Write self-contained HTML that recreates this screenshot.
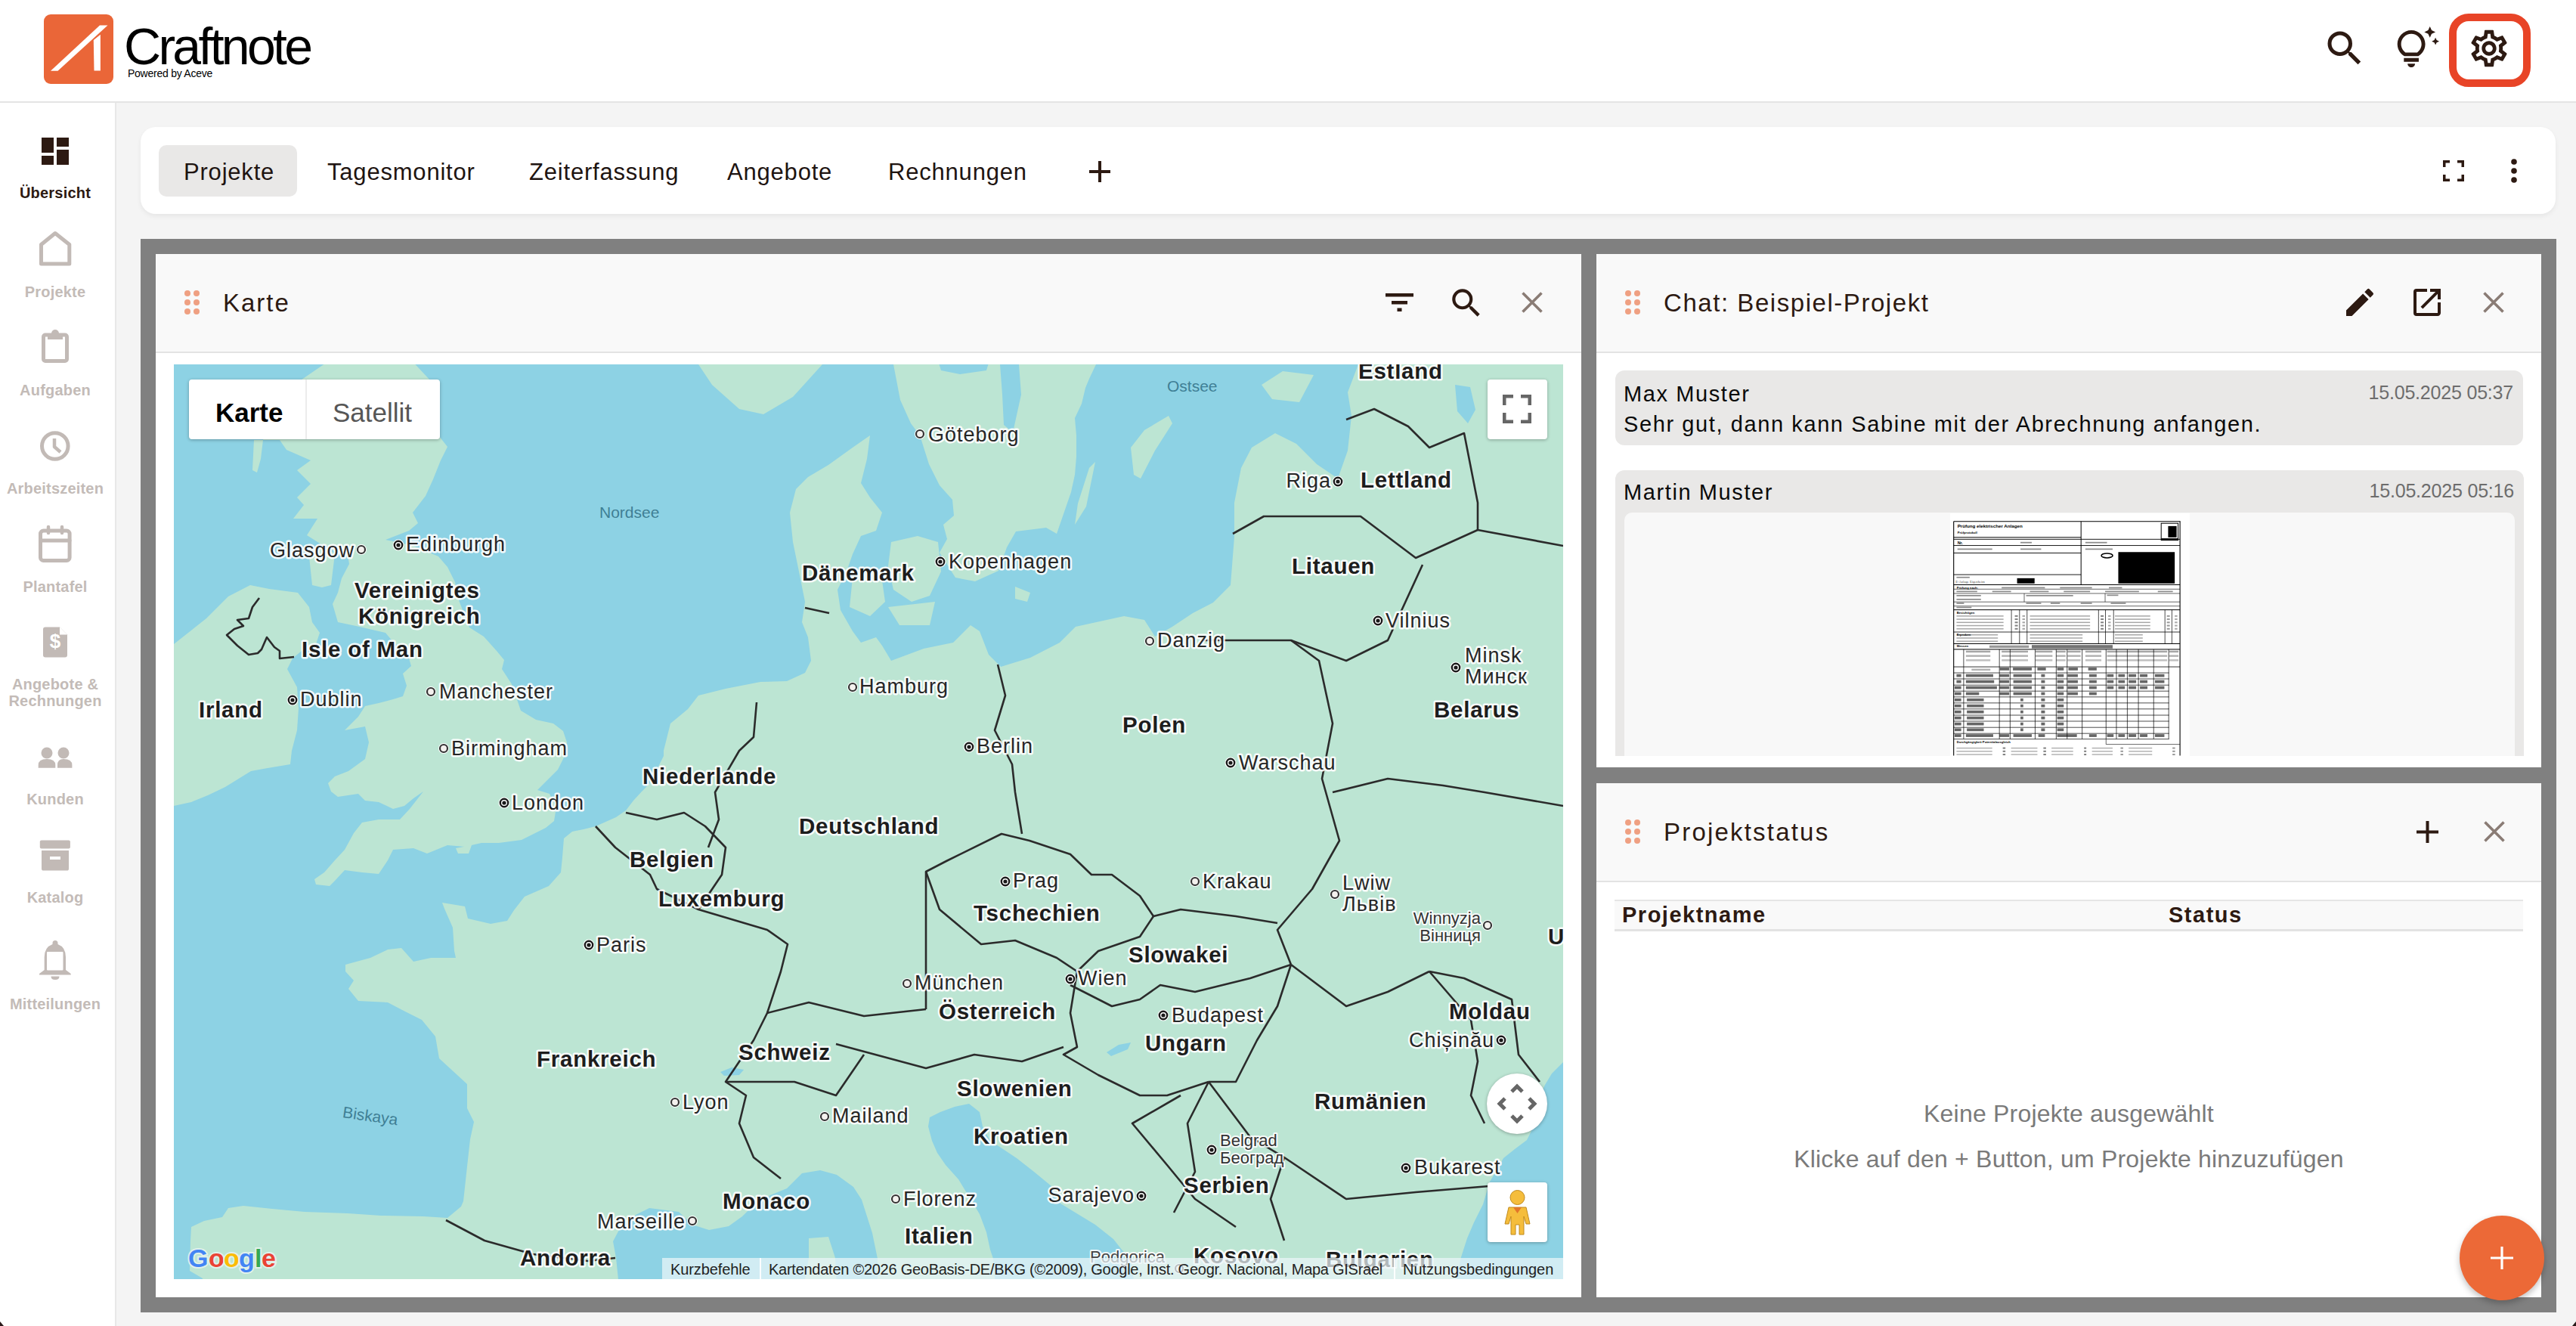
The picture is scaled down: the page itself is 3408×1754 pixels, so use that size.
<!DOCTYPE html>
<html><head><meta charset="utf-8">
<style>
*{margin:0;padding:0;box-sizing:border-box}
html,body{width:3408px;height:1754px;overflow:hidden;background:#f4f4f4;font-family:"Liberation Sans",sans-serif;color:#2d1a12}
.a{position:absolute}
.t{position:absolute;white-space:nowrap;line-height:1}
#hdr{left:0;top:0;width:3408px;height:136px;background:#fff;border-bottom:2px solid #e4e4e4}
#side{left:0;top:136px;width:154px;height:1618px;background:#fff;border-right:2px solid #e8e8e8}
.navl{position:absolute;left:0;width:146px;letter-spacing:0.2px;text-align:center;font-weight:bold;font-size:20px;color:#c3bbb7;line-height:22px;white-space:nowrap}
.navi{position:absolute;left:48px;width:56px;height:56px}
#tabs{left:186px;top:168px;width:3195px;height:115px;background:#fff;border-radius:20px;box-shadow:0 3px 6px rgba(0,0,0,.06)}
#frame{left:186px;top:316px;width:3196px;height:1420px;background:#808080}
.w{position:absolute;background:#fff;overflow:hidden}
.wh{position:absolute;left:0;top:0;right:0;height:131px;background:#f9f9f9;border-bottom:2px solid #e3e3e3}
.dots{position:absolute;width:21px;height:32px}
.wt{position:absolute;font-size:33px;color:#2d1a12;white-space:nowrap;line-height:1}
.tab{font-size:31px;color:#1e1411;letter-spacing:0.8px}
.msg{font-size:29px;color:#0a0a0a;letter-spacing:1.6px}
.ts{font-size:25px;color:#6d6d6d;letter-spacing:-0.2px}
.thd{font-size:29px;font-weight:bold;color:#2d1a12;letter-spacing:1.5px}
.empty{font-size:32px;color:#7a7a7a;letter-spacing:0.2px}
</style></head><body>

<!-- HEADER -->
<div id="hdr" class="a">
  <svg class="a" style="left:58px;top:19px" width="92" height="92" viewBox="0 0 92 92">
    <rect x="0" y="0" width="92" height="92" rx="9" fill="#ea6638"/>
    <path d="M9 74.8 L18.5 74.8 L84.5 14.5 L74 14.5 Z" fill="#fff"/>
    <path d="M65.8 34 L74.9 26.7 L74.9 74.4 L66.5 74.4 Z" fill="#fff"/>
  </svg>
  <div class="t" id="brand" style="left:164px;top:27px;font-size:68px;color:#000;letter-spacing:-3.7px">Craftnote</div>
  <div class="t" id="powered" style="left:169px;top:90px;font-size:14px;color:#000;letter-spacing:-0.25px">Powered by Aceve</div>
  <!-- search -->
  <svg class="a" style="left:3072px;top:34px" width="60" height="60" viewBox="0 0 24 24"><path fill="#2d1a12" d="M15.5 14h-.79l-.28-.27A6.47 6.47 0 0 0 16 9.5 6.5 6.5 0 1 0 9.5 16c1.61 0 3.09-.59 4.23-1.57l.27.28v.79l5 4.99L20.49 19l-4.99-5zm-6 0C7.01 14 5 11.99 5 9.5S7.01 5 9.5 5 14 7.01 14 9.5 11.99 14 9.5 14z"/></svg>
  <!-- bulb -->
  <svg class="a" style="left:3168px;top:35px" width="59" height="59" viewBox="0 0 24 24"><path fill="#2d1a12" d="M7 20h4c0 1.1-.9 2-2 2s-2-.9-2-2zm-2-1h8v-2H5v2zm11.5-9.5c0 3.82-2.66 5.86-3.77 6.5H5.27c-1.11-.64-3.77-2.68-3.77-6.5C1.5 5.36 4.86 2 9 2s7.5 3.36 7.5 7.5zm-2 0C14.5 6.47 12.030 4 9 4S3.5 6.47 3.5 9.5c0 2.47 1.49 3.89 2.35 4.5h6.3c.86-.61 2.35-2.03 2.35-4.5zm6.87-2.13L20 8l1.37.63L22 10l.63-1.37L24 8l-1.37-.63L22 6l-.63 1.37zM19 6l.94-2.06L22 3l-2.06-.94L19 0l-.94 2.06L16 3l2.06.94L19 6z"/></svg>
  <!-- settings highlighted -->
  <div class="a" style="left:3240px;top:18px;width:108px;height:97px;border:10px solid #e84427;border-radius:26px"></div>
  <svg class="a" style="left:3264px;top:35px" width="58" height="58" viewBox="0 0 24 24"><path fill="#2d1a12" d="M19.43 12.98c.04-.32.07-.64.07-.98 0-.34-.03-.66-.07-.98l2.11-1.65c.19-.15.24-.42.12-.64l-2-3.46a.5.5 0 0 0-.61-.22l-2.49 1c-.52-.4-1.08-.73-1.69-.98l-.38-2.65A.49.49 0 0 0 14 2h-4c-.25 0-.46.18-.49.42l-.38 2.65c-.61.25-1.17.59-1.69.98l-2.49-1a.57.57 0 0 0-.18-.03c-.17 0-.34.09-.43.25l-2 3.46c-.13.22-.07.49.12.64l2.11 1.65c-.04.32-.07.65-.07.98 0 .33.03.66.07.98l-2.11 1.65c-.19.15-.24.42-.12.64l2 3.46a.5.5 0 0 0 .61.22l2.49-1c.52.4 1.08.73 1.69.98l.38 2.65c.03.24.24.42.49.42h4c.25 0 .46-.18.49-.42l.38-2.65c.61-.25 1.17-.59 1.69-.98l2.49 1c.06.02.12.03.18.03.17 0 .34-.09.43-.25l2-3.46c.12-.22.07-.49-.12-.64l-2.11-1.65zm-1.98-1.71c.04.31.05.52.05.73 0 .21-.02.43-.05.73l-.14 1.13.89.7 1.08.84-.7 1.21-1.27-.51-1.04-.42-.9.68c-.43.32-.84.56-1.25.73l-1.06.43-.16 1.13-.2 1.35h-1.4l-.19-1.35-.16-1.13-1.06-.43c-.43-.18-.83-.41-1.23-.71l-.91-.7-1.06.43-1.27.51-.7-1.21 1.08-.84.89-.7-.14-1.13c-.03-.31-.05-.54-.05-.74s.02-.43.05-.73l.14-1.13-.89-.7-1.08-.84.7-1.21 1.27.51 1.04.42.9-.68c.43-.32.84-.56 1.25-.73l1.06-.43.16-1.13.2-1.35h1.39l.19 1.35.16 1.13 1.06.43c.43.18.83.41 1.23.71l.91.7 1.06-.43 1.27-.51.7 1.21-1.07.85-.89.7.14 1.13zM12 8c-2.21 0-4 1.79-4 4s1.79 4 4 4 4-1.79 4-4-1.79-4-4-4zm0 6c-1.1 0-2-.9-2-2s.9-2 2-2 2 .9 2 2-.9 2-2 2z"/></svg>
</div>

<!-- SIDEBAR -->
<div id="side" class="a">
</div>
<svg class="a" style="left:0;top:0" width="153" height="1754" viewBox="0 0 153 1754">
  <g fill="#2d1a12">
    <rect x="55" y="182" width="16" height="20"/><rect x="55" y="206" width="16" height="12"/>
    <rect x="75" y="182" width="16" height="12"/><rect x="75" y="198" width="16" height="20"/>
  </g>
  <g fill="none" stroke="#c2bab6" stroke-width="5" stroke-linejoin="round" stroke-linecap="round">
    <path d="M54.5 323.5 L73 308.5 L91.8 323.5 V349 H54.5 Z"/>
    <rect x="57.5" y="443" width="31" height="34.5" rx="2.5"/>
    <circle cx="72.8" cy="590" r="17.3"/>
    <path d="M72 580 V591 L80 598" stroke-width="4.5" stroke-linecap="butt"/>
    <rect x="53.5" y="702" width="38.6" height="39.5" rx="4"/>
    <path d="M53.5 715 H92" />
    <path d="M64 697 V705 M82 697 V705" stroke-width="4.5"/>
  </g>
  <g fill="#c2bab6">
    <rect x="63" y="441" width="20" height="8"/>
    <circle cx="73" cy="441" r="5"/>
    <path d="M60 829.5 H79 L89 839.5 V866.6 Q89 869.6 86 869.6 H60 Q57 869.6 57 866.6 V832.5 Q57 829.5 60 829.5Z"/>
    <circle cx="62" cy="996" r="7.5"/><circle cx="84" cy="996" r="7.5"/>
    <path d="M50.7 1015.7 V1012 Q50.7 1004 62 1004 Q73.3 1004 73.3 1012 V1015.7Z"/>
    <path d="M76 1015.7 V1012 Q76 1004 84 1004 Q95.4 1004 95.4 1012 V1015.7Z"/>
    <rect x="52.8" y="1111.5" width="40.1" height="11" rx="2"/>
    <path d="M55 1125 H91 V1149 Q91 1151.6 88.5 1151.6 H57.5 Q55 1151.6 55 1149Z"/>
    <path d="M73 1244 a3.5 3.5 0 0 1 3.5 3.5 V1249 Q87 1253 87 1266 V1283 L93.7 1288 V1289.5 H52 V1288 L58.7 1283 V1266 Q58.7 1253 69.5 1249 V1247.5 A3.5 3.5 0 0 1 73 1244Z"/>
    <path d="M67.5 1291.5 H78.5 Q78.5 1296 73 1296 Q67.5 1296 67.5 1291.5Z"/>
  </g>
  <g fill="#fff">
    <rect x="66" y="1133" width="14" height="4"/>
    <path d="M79 829.5 V839.5 H89Z"/>
    <rect x="62" y="1259" width="21.5" height="24.5" rx="1"/>
  </g>
  <text x="73" y="850" font-family="Liberation Sans" font-weight="bold" font-size="26" fill="#fff" text-anchor="middle" dominant-baseline="middle">$</text>
</svg>
<div class="navl" style="top:244px;color:#2d1a12">Übersicht</div>
<div class="navl" style="top:375px">Projekte</div>
<div class="navl" style="top:505px">Aufgaben</div>
<div class="navl" style="top:635px">Arbeitszeiten</div>
<div class="navl" style="top:765px">Plantafel</div>
<div class="navl" style="top:894px">Angebote &amp;<br>Rechnungen</div>
<div class="navl" style="top:1046px">Kunden</div>
<div class="navl" style="top:1176px">Katalog</div>
<div class="navl" style="top:1317px">Mitteilungen</div>

<!-- TABS -->
<div id="tabs" class="a">
  <div class="a" style="left:24px;top:24px;width:183px;height:68px;background:#e9e8e7;border-radius:10px"></div>
  <div class="t tab" style="left:57px;top:44px">Projekte</div>
  <div class="t tab" style="left:247px;top:44px">Tagesmonitor</div>
  <div class="t tab" style="left:514px;top:44px">Zeiterfassung</div>
  <div class="t tab" style="left:776px;top:44px">Angebote</div>
  <div class="t tab" style="left:989px;top:44px">Rechnungen</div>
  <svg class="a" style="left:1253px;top:43px" width="32" height="32" viewBox="0 0 32 32"><path d="M14 2h4v12h12v4H18v12h-4V18H2v-4h12z" fill="#2d1a12"/></svg>
  <svg class="a" style="left:3046px;top:44px" width="28" height="28" viewBox="0 0 28 28"><path d="M0 0h9v3.5H3.5V9H0zM19 0h9v9h-3.5V3.5H19zM0 19h3.5v5.5H9V28H0zM24.5 19H28v9h-9v-3.5h5.5z" fill="#2d1a12"/></svg>
  <svg class="a" style="left:3136px;top:42px" width="8" height="32" viewBox="0 0 8 32"><circle cx="4" cy="4" r="3.8" fill="#2d1a12"/><circle cx="4" cy="16" r="3.8" fill="#2d1a12"/><circle cx="4" cy="28" r="3.8" fill="#2d1a12"/></svg>
</div>

<!-- FRAME -->
<div id="frame" class="a"></div>
<!-- KARTE -->
<div class="w" id="wk" style="left:206px;top:336px;width:1886px;height:1380px">
  <div class="wh"></div>
  <svg class="a" style="left:38px;top:48px" width="21" height="33" viewBox="0 0 21 33"><g fill="#efa082"><circle cx="4" cy="4" r="4"/><circle cx="16" cy="4" r="4"/><circle cx="4" cy="16" r="4"/><circle cx="16" cy="16" r="4"/><circle cx="4" cy="28" r="4"/><circle cx="16" cy="28" r="4"/></g></svg>
  <div class="wt" style="left:89px;top:48px;letter-spacing:2px">Karte</div>
  <svg class="a" style="left:1627px;top:52px" width="37" height="24" viewBox="0 0 37 24"><path d="M0 0h37v4.5H0zM8 10h21v4.5H8zM15.5 19.5h6v4.5h-6z" fill="#2d1a12"/></svg>
  <svg class="a" style="left:1709px;top:40px" width="50" height="50" viewBox="0 0 24 24"><path fill="#2d1a12" d="M15.5 14h-.79l-.28-.27A6.47 6.47 0 0 0 16 9.5 6.5 6.5 0 1 0 9.5 16c1.61 0 3.09-.59 4.23-1.57l.27.28v.79l5 4.99L20.49 19l-4.99-5zm-6 0C7.01 14 5 11.99 5 9.5S7.01 5 9.5 5 14 7.01 14 9.5 11.99 14 9.5 14z"/></svg>
  <svg class="a" style="left:1807px;top:50px" width="28" height="28" viewBox="0 0 28 28"><path d="M1.5 1.5L26.5 26.5M26.5 1.5L1.5 26.5" stroke="#8a7c75" stroke-width="3.6"/></svg>
  <div class="a" id="map" style="left:24px;top:146px;width:1838px;height:1210px;background:#8dd2e4;overflow:hidden">
<!--MAPSVG-->
<svg class="a" style="left:0;top:0" width="1838" height="1210" viewBox="0 0 1838 1210">
<rect width="1838" height="1210" fill="#8dd2e4"/>
<path fill="#bce5d3" d="M39 1220 L38 1209 L21 1199 L22 1160 L23 1141 L40 1133 L64 1128 L72 1116 L92 1113 L130 1117 L173 1121 L230 1123 L274 1126 L330 1127 L362 1129 L380 1114 L383 1107 L388 1061 L392 1025 L397 1002 L388 984 L388 952 L351 918 L346 889 L328 867 L306 856 L283 844 L244 842 L231 826 L238 815 L227 803 L227 794 L260 785 L283 774 L301 772 L317 790 L340 785 L373 785 L371 776 L369 745 L358 720 L355 712 L385 717 L389 733 L419 740 L441 736 L450 722 L464 704 L496 690 L512 672 L514 652 L516 627 L527 618 L542 615 L558 611 L585 599 L598 590 L608 577 L619 565 L630 554 L641 532 L648 518 L648 511 L657 475 L680 456 L694 438 L730 429 L776 420 L811 419 L835 408 L843 392 L839 361 L831 341 L835 314 L827 274 L819 235 L815 196 L823 165 L839 149 L866 133 L898 110 L921 94 L917 125 L909 157 L921 176 L937 196 L929 220 L909 227 L898 251 L890 274 L878 298 L882 325 L898 353 L909 368 L929 361 L937 372 L949 392 L992 376 L1031 368 L1054 345 L1066 353 L1078 384 L1094 400 L1133 388 L1172 368 L1193 347 L1257 333 L1284 338 L1298 360 L1321 347 L1348 329 L1375 315 L1398 292 L1403 228 L1403 183 L1412 137 L1426 110 L1457 91 L1485 105 L1512 132 L1540 151 L1553 114 L1558 68 L1553 37 L1567 0 L1567 -10 L1850 -10 L1850 923 L1838 923 L1823 938 L1814 953 L1802 978 L1796 1014 L1790 1026 L1774 1038 L1759 1050 L1750 1066 L1741 1081 L1732 1111 L1720 1135 L1711 1156 L1702 1184 L1696 1220 L1271 1220 L1266 1183 L1254 1171 L1243 1157 L1219 1138 L1196 1124 L1173 1110 L1161 1087 L1138 1068 L1115 1050 L1091 1034 L1080 1027 L1070 1008 L1066 989 L1052 978 L1033 982 L1014 989 L1000 996 L998 1008 L1003 1027 L1010 1043 L1021 1059 L1038 1078 L1052 1101 L1066 1124 L1075 1148 L1080 1171 L1084 1183 L1087 1220 L931 1220 L931 1183 L924 1149 L917 1127 L910 1105 L899 1088 L877 1072 L855 1066 L831 1070 L811 1090 L789 1099 L767 1112 L752 1127 L734 1140 L708 1145 L686 1138 L668 1121 L629 1116 L611 1125 L589 1145 L581 1160 L585 1182 L589 1220Z M213 -10 L310 -10 L340 22 L348 60 L351 95 L362 109 L353 127 L343 152 L333 174 L316 196 L323 210 L311 220 L280 232 L314 239 L350 254 L362 268 L372 288 L377 312 L391 348 L410 360 L427 379 L437 391 L434 403 L447 423 L459 458 L479 470 L502 475 L515 485 L520 500 L517 518 L508 536 L497 547 L481 563 L497 568 L506 586 L503 604 L492 613 L470 624 L460 629 L430 633 L407 633 L385 638 L362 636 L335 647 L317 640 L290 642 L283 656 L271 674 L249 672 L226 669 L213 683 L206 690 L188 688 L186 681 L199 672 L213 656 L226 642 L238 620 L249 606 L271 602 L299 602 L312 588 L330 565 L317 574 L305 584 L290 588 L271 579 L253 577 L244 568 L217 572 L208 565 L204 554 L213 545 L231 538 L253 522 L258 500 L253 479 L226 484 L244 466 L253 452 L271 448 L290 443 L303 439 L308 425 L303 409 L314 399 L309 382 L290 367 L280 355 L241 346 L217 341 L210 317 L217 302 L222 283 L232 264 L230 252 L215 250 L204 240 L195 238 L176 226 L190 204 L158 204 L172 186 L163 176 L181 158 L163 140 L181 127 L149 113 L140 100 L118 100 L140 40 L213 -10Z M195 238 L212 250 L212 259 L208 292 L196 295 L183 292 L179 254Z M-10 370 L0 370 L43 336 L72 307 L101 292 L126 297 L164 302 L179 321 L183 341 L193 355 L188 370 L169 379 L157 389 L150 403 L163 427 L165 455 L163 484 L156 511 L154 529 L124 534 L102 538 L68 559 L45 570 L23 579 L0 584 L-10 584Z M694 -10 L694 0 L712 27 L748 59 L780 66 L819 43 L858 0 L858 -10Z M952 -10 L952 0 L961 47 L975 78 L987 94 L999 132 L1013 160 L1030 179 L1032 200 L1018 212 L1023 231 L1013 249 L1034 282 L1060 287 L1091 273 L1102 242 L1114 221 L1154 216 L1168 224 L1178 195 L1187 169 L1192 146 L1194 122 L1194 94 L1192 71 L1201 52 L1206 31 L1211 19 L1220 0 L1220 -10Z M949 235 L984 227 L1011 235 L1015 274 L1000 306 L976 314 L952 298 L945 267Z M898 282 L937 286 L941 314 L921 333 L894 321Z M945 321 L1007 314 L1000 345 L960 345Z M1113 294 L1133 302 L1129 314 L1113 310Z M1219 129 L1211 137 L1196 184 L1192 212 L1207 188Z M1316 68 L1321 78 L1298 114 L1279 151 L1270 146 L1266 110 L1284 87Z M1439 27 L1467 9 L1508 14 L1489 50 L1453 46Z M840 1156 L866 1154 L875 1182 L877 1220 L833 1220 L840 1182Z M373 640 L394 636 L390 647 L376 647Z M106 100 L118 100 L115 125 L110 143 L104 140Z"/>
<path fill="#8dd2e4" d="M1011 -5 L1079 -5 L1075 8 L1040 13 L1015 8Z M1093 0 L1118 0 L1121 40 L1110 90 L1098 80 L1096 40Z M1695 27 L1715 30 L1722 60 L1712 78 L1698 62Z M1234 910 L1250 900 L1266 897 L1262 906 L1240 915Z M723 936 L738 930 L754 933 L748 940 L728 941Z"/>
<g fill="none" stroke="#2b2b2b" stroke-width="2.6" stroke-linejoin="round">
<path d="M113 309 L104 321 L99 336 L84 338 L92 346 L80 350 L70 358 L84 372 L99 384 L111 382 L116 377 L123 361 L133 374 L140 379 L140 389 L159 387"/>
<path d="M558 611 L584 639 L630 675 L639 694 L694 721 L785 748 L812 767 L803 803 L785 858 L767 894 L730 949 L757 967 L748 1004 L767 1049 L803 1077"/>
<path d="M598 593 L639 602 L675 593 L703 611 L730 639 L725 675 L694 721"/>
<path d="M771 447 L767 493 L748 511 L716 566 L721 602 L707 639"/>
<path d="M785 858 L840 844 L913 862 L995 853"/>
<path d="M730 949 L821 949 L876 967 L913 913"/>
<path d="M876 899 L995 931 L1059 913 L1122 922 L1177 903"/>
<path d="M995 853 L995 671 L1022 657 L1095 621 L1132 630 L1186 648 L1214 675 L1241 675 L1278 703 L1296 730 L1332 721 L1405 730 L1460 739"/>
<path d="M995 671 L1013 721 L1068 767 L1113 762 L1168 785 L1195 803 L1223 776 L1278 757 L1296 730"/>
<path d="M1186 821 L1241 849 L1278 840 L1305 821 L1351 830 L1424 812 L1478 794"/>
<path d="M1195 803 L1186 858 L1195 903 L1177 913 L1223 940 L1278 967 L1314 967 L1369 949"/>
<path d="M1478 794 L1460 849 L1433 894 L1405 949 L1369 949"/>
<path d="M1090 397 L1100 438 L1086 484 L1109 529 L1113 566 L1122 621"/>
<path d="M1360 365 L1396 365 L1478 365 L1515 392 L1533 475 L1519 548 L1542 630 L1506 694 L1460 748 L1478 794"/>
<path d="M1401 224 L1442 201 L1570 201 L1643 256 L1725 219"/>
<path d="M1478 365 L1551 392 L1606 365 L1652 265"/>
<path d="M1551 73 L1588 59 L1633 82 L1661 110 L1707 91 L1725 183 L1725 219 L1838 240"/>
<path d="M1533 566 L1606 548 L1679 557 L1734 566 L1838 584"/>
<path d="M1661 803 L1707 812 L1770 840 L1779 913 L1807 949"/>
<path d="M1661 803 L1716 867 L1725 922 L1716 967 L1734 1004"/>
<path d="M1478 794 L1551 849 L1606 830 L1661 803"/>
<path d="M1369 949 L1424 1022 L1469 1049 L1551 1104 L1643 1095 L1752 1086"/>
<path d="M1332 967 L1268 1004 L1314 1059 L1351 1104 L1405 1141"/>
<path d="M1369 949 L1341 1004 L1351 1068 L1323 1122"/>
<path d="M1469 1049 L1451 1104 L1469 1159"/>
<path d="M360 1132 L411 1159 L475 1177 L548 1186 L584 1182"/>
<path d="M835 322 L867 329"/>
</g>
<g font-family="Liberation Sans" font-weight="bold" font-size="29.5" letter-spacing="0.75" fill="#1d1d1d" stroke="#fff" stroke-opacity=".9" stroke-width="5" paint-order="stroke" stroke-linejoin="round">
<text x="1567" y="19">Estland</text>
<text x="1570" y="163">Lettland</text>
<text x="1479" y="277">Litauen</text>
<text x="1667" y="467">Belarus</text>
<text x="1255" y="487">Polen</text>
<text x="831" y="286">Dänemark</text>
<text x="239" y="309">Vereinigtes</text>
<text x="244" y="343">Königreich</text>
<text x="169" y="387">Isle of Man</text>
<text x="33" y="467">Irland</text>
<text x="620" y="555">Niederlande</text>
<text x="827" y="621">Deutschland</text>
<text x="603" y="665">Belgien</text>
<text x="641" y="717">Luxemburg</text>
<text x="1058" y="736">Tschechien</text>
<text x="1263" y="791">Slowakei</text>
<text x="1012" y="866">Österreich</text>
<text x="747" y="920">Schweiz</text>
<text x="480" y="929">Frankreich</text>
<text x="1285" y="908">Ungarn</text>
<text x="1036" y="968">Slowenien</text>
<text x="1058" y="1031">Kroatien</text>
<text x="1509" y="985">Rumänien</text>
<text x="1687" y="866">Moldau</text>
<text x="726" y="1117">Monaco</text>
<text x="1336" y="1096">Serbien</text>
<text x="967" y="1163">Italien</text>
<text x="458" y="1192">Andorra</text>
<text x="1349" y="1189">Kosovo</text>
<text x="1524" y="1194">Bulgarien</text>
<text x="1818" y="767">U</text>
</g>
<g font-family="Liberation Sans" font-size="27" letter-spacing="1" fill="#262626" stroke="#fff" stroke-opacity=".9" stroke-width="5" paint-order="stroke" stroke-linejoin="round">
<text x="998" y="102">Göteborg</text>
<text x="1531" y="163" text-anchor="end">Riga</text>
<text x="1025" y="270">Kopenhagen</text>
<text x="239" y="255" text-anchor="end">Glasgow</text>
<text x="307" y="247">Edinburgh</text>
<text x="1301" y="374">Danzig</text>
<text x="1603" y="348">Vilnius</text>
<text x="907" y="435">Hamburg</text>
<text x="351" y="442">Manchester</text>
<text x="167" y="452">Dublin</text>
<text x="367" y="517">Birmingham</text>
<text x="1062" y="514">Berlin</text>
<text x="1409" y="536">Warschau</text>
<text x="447" y="589">London</text>
<text x="559" y="777">Paris</text>
<text x="1110" y="692">Prag</text>
<text x="1361" y="693">Krakau</text>
<text x="980" y="827">München</text>
<text x="1196" y="821">Wien</text>
<text x="1320" y="870">Budapest</text>
<text x="1747" y="903" text-anchor="end">Chișinău</text>
<text x="673" y="985">Lyon</text>
<text x="871" y="1003">Mailand</text>
<text x="1641" y="1071">Bukarest</text>
<text x="677" y="1143" text-anchor="end">Marseille</text>
<text x="965" y="1113">Florenz</text>
<text x="1271" y="1108" text-anchor="end">Sarajevo</text>
<text x="1708" y="394">Minsk</text><text x="1708" y="422">Минск</text>
<text x="1546" y="695">Lwiw</text><text x="1546" y="723">Львів</text>
</g>
<g font-family="Liberation Sans" font-size="22" fill="#333" stroke="#fff" stroke-opacity=".9" stroke-width="4" paint-order="stroke" stroke-linejoin="round">
<text x="1729" y="740" text-anchor="end">Winnyzja</text><text x="1729" y="763" text-anchor="end">Вінниця</text>
<text x="1384" y="1034">Belgrad</text><text x="1384" y="1057">Београд</text>
<text x="1212" y="1188" fill="#444">Podgorica</text>
</g>
<g stroke="#fff" stroke-width="2">
<circle cx="987" cy="92" r="7" fill="#fff" stroke="none"/><circle cx="987" cy="92" r="5" fill="#f4f1ee" stroke="#333" stroke-width="2.2"/>
<circle cx="1540" cy="155" r="7.5" fill="#fff" stroke="none"/><circle cx="1540" cy="155" r="5.2" fill="#fff" stroke="#1a1a1a" stroke-width="2.4"/><circle cx="1540" cy="155" r="2.6" fill="#1a1a1a" stroke="none"/>
<circle cx="1014" cy="261" r="7.5" fill="#fff" stroke="none"/><circle cx="1014" cy="261" r="5.2" fill="#fff" stroke="#1a1a1a" stroke-width="2.4"/><circle cx="1014" cy="261" r="2.6" fill="#1a1a1a" stroke="none"/>
<circle cx="248" cy="245" r="7" fill="#fff" stroke="none"/><circle cx="248" cy="245" r="5" fill="#f4f1ee" stroke="#333" stroke-width="2.2"/>
<circle cx="297" cy="239" r="7.5" fill="#fff" stroke="none"/><circle cx="297" cy="239" r="5.2" fill="#fff" stroke="#1a1a1a" stroke-width="2.4"/><circle cx="297" cy="239" r="2.6" fill="#1a1a1a" stroke="none"/>
<circle cx="1291" cy="366" r="7" fill="#fff" stroke="none"/><circle cx="1291" cy="366" r="5" fill="#f4f1ee" stroke="#333" stroke-width="2.2"/>
<circle cx="1593" cy="339" r="7.5" fill="#fff" stroke="none"/><circle cx="1593" cy="339" r="5.2" fill="#fff" stroke="#1a1a1a" stroke-width="2.4"/><circle cx="1593" cy="339" r="2.6" fill="#1a1a1a" stroke="none"/>
<circle cx="898" cy="427" r="7" fill="#fff" stroke="none"/><circle cx="898" cy="427" r="5" fill="#f4f1ee" stroke="#333" stroke-width="2.2"/>
<circle cx="340" cy="433" r="7" fill="#fff" stroke="none"/><circle cx="340" cy="433" r="5" fill="#f4f1ee" stroke="#333" stroke-width="2.2"/>
<circle cx="157" cy="444" r="7.5" fill="#fff" stroke="none"/><circle cx="157" cy="444" r="5.2" fill="#fff" stroke="#1a1a1a" stroke-width="2.4"/><circle cx="157" cy="444" r="2.6" fill="#1a1a1a" stroke="none"/>
<circle cx="357" cy="508" r="7" fill="#fff" stroke="none"/><circle cx="357" cy="508" r="5" fill="#f4f1ee" stroke="#333" stroke-width="2.2"/>
<circle cx="1052" cy="506" r="7.5" fill="#fff" stroke="none"/><circle cx="1052" cy="506" r="5.2" fill="#fff" stroke="#1a1a1a" stroke-width="2.4"/><circle cx="1052" cy="506" r="2.6" fill="#1a1a1a" stroke="none"/>
<circle cx="1398" cy="527" r="7.5" fill="#fff" stroke="none"/><circle cx="1398" cy="527" r="5.2" fill="#fff" stroke="#1a1a1a" stroke-width="2.4"/><circle cx="1398" cy="527" r="2.6" fill="#1a1a1a" stroke="none"/>
<circle cx="437" cy="580" r="7.5" fill="#fff" stroke="none"/><circle cx="437" cy="580" r="5.2" fill="#fff" stroke="#1a1a1a" stroke-width="2.4"/><circle cx="437" cy="580" r="2.6" fill="#1a1a1a" stroke="none"/>
<circle cx="549" cy="768" r="7.5" fill="#fff" stroke="none"/><circle cx="549" cy="768" r="5.2" fill="#fff" stroke="#1a1a1a" stroke-width="2.4"/><circle cx="549" cy="768" r="2.6" fill="#1a1a1a" stroke="none"/>
<circle cx="1100" cy="684" r="7.5" fill="#fff" stroke="none"/><circle cx="1100" cy="684" r="5.2" fill="#fff" stroke="#1a1a1a" stroke-width="2.4"/><circle cx="1100" cy="684" r="2.6" fill="#1a1a1a" stroke="none"/>
<circle cx="1351" cy="684" r="7" fill="#fff" stroke="none"/><circle cx="1351" cy="684" r="5" fill="#f4f1ee" stroke="#333" stroke-width="2.2"/>
<circle cx="970" cy="819" r="7" fill="#fff" stroke="none"/><circle cx="970" cy="819" r="5" fill="#f4f1ee" stroke="#333" stroke-width="2.2"/>
<circle cx="1186" cy="813" r="7.5" fill="#fff" stroke="none"/><circle cx="1186" cy="813" r="5.2" fill="#fff" stroke="#1a1a1a" stroke-width="2.4"/><circle cx="1186" cy="813" r="2.6" fill="#1a1a1a" stroke="none"/>
<circle cx="1309" cy="861" r="7.5" fill="#fff" stroke="none"/><circle cx="1309" cy="861" r="5.2" fill="#fff" stroke="#1a1a1a" stroke-width="2.4"/><circle cx="1309" cy="861" r="2.6" fill="#1a1a1a" stroke="none"/>
<circle cx="1756" cy="894" r="7.5" fill="#fff" stroke="none"/><circle cx="1756" cy="894" r="5.2" fill="#fff" stroke="#1a1a1a" stroke-width="2.4"/><circle cx="1756" cy="894" r="2.6" fill="#1a1a1a" stroke="none"/>
<circle cx="663" cy="976" r="7" fill="#fff" stroke="none"/><circle cx="663" cy="976" r="5" fill="#f4f1ee" stroke="#333" stroke-width="2.2"/>
<circle cx="861" cy="995" r="7" fill="#fff" stroke="none"/><circle cx="861" cy="995" r="5" fill="#f4f1ee" stroke="#333" stroke-width="2.2"/>
<circle cx="1630" cy="1063" r="7.5" fill="#fff" stroke="none"/><circle cx="1630" cy="1063" r="5.2" fill="#fff" stroke="#1a1a1a" stroke-width="2.4"/><circle cx="1630" cy="1063" r="2.6" fill="#1a1a1a" stroke="none"/>
<circle cx="686" cy="1133" r="7" fill="#fff" stroke="none"/><circle cx="686" cy="1133" r="5" fill="#f4f1ee" stroke="#333" stroke-width="2.2"/>
<circle cx="955" cy="1104" r="7" fill="#fff" stroke="none"/><circle cx="955" cy="1104" r="5" fill="#f4f1ee" stroke="#333" stroke-width="2.2"/>
<circle cx="1280" cy="1100" r="7.5" fill="#fff" stroke="none"/><circle cx="1280" cy="1100" r="5.2" fill="#fff" stroke="#1a1a1a" stroke-width="2.4"/><circle cx="1280" cy="1100" r="2.6" fill="#1a1a1a" stroke="none"/>
<circle cx="1330" cy="1196" r="7" fill="#fff" stroke="none"/><circle cx="1330" cy="1196" r="5" fill="#f4f1ee" stroke="#333" stroke-width="2.2"/>
<circle cx="1696" cy="401" r="7.5" fill="#fff" stroke="none"/><circle cx="1696" cy="401" r="5.2" fill="#fff" stroke="#1a1a1a" stroke-width="2.4"/><circle cx="1696" cy="401" r="2.6" fill="#1a1a1a" stroke="none"/>
<circle cx="1536" cy="701" r="7" fill="#fff" stroke="none"/><circle cx="1536" cy="701" r="5" fill="#f4f1ee" stroke="#333" stroke-width="2.2"/>
<circle cx="1738" cy="742" r="7" fill="#fff" stroke="none"/><circle cx="1738" cy="742" r="5" fill="#f4f1ee" stroke="#333" stroke-width="2.2"/>
<circle cx="1373" cy="1039" r="7.5" fill="#fff" stroke="none"/><circle cx="1373" cy="1039" r="5.2" fill="#fff" stroke="#1a1a1a" stroke-width="2.4"/><circle cx="1373" cy="1039" r="2.6" fill="#1a1a1a" stroke="none"/>
</g>
<g font-family="Liberation Sans" font-size="21" fill="#3f7f95" stroke="#8dd2e4" stroke-width="3" paint-order="stroke">
<text x="563" y="203">Nordsee</text><text x="1314" y="36">Ostsee</text>
<text x="223" y="1001" transform="rotate(8 258 995)">Biskaya</text>
</g>
</svg>
<!--/MAPSVG-->
<div class="a" style="left:20px;top:20px;width:332px;height:79px;background:#fff;border-radius:4px;box-shadow:0 1px 4px rgba(0,0,0,.3)"></div>
<div class="a" style="left:174px;top:20px;width:2px;height:79px;background:#ececec"></div>
<div class="t" style="left:55px;top:46px;font-size:35px;font-weight:bold;color:#000">Karte</div>
<div class="t" style="left:210px;top:46px;font-size:35px;color:#565656">Satellit</div>
<div class="a" style="left:1738px;top:20px;width:79px;height:79px;background:#fff;border-radius:4px;box-shadow:0 1px 4px rgba(0,0,0,.3)"></div>
<svg class="a" style="left:1758px;top:40px" width="38" height="38" viewBox="0 0 38 38"><path d="M2 14V2h12M24 2h12v12M36 24v12H24M14 36H2V24" fill="none" stroke="#666" stroke-width="5"/></svg>
<div class="a" style="left:1737px;top:938px;width:80px;height:80px;background:#fff;border-radius:50%;box-shadow:0 1px 4px rgba(0,0,0,.3)"></div>
<svg class="a" style="left:1737px;top:938px" width="80" height="80" viewBox="0 0 80 80"><path d="M33 24l7-7 7 7M24 33l-7 7 7 7M56 33l7 7-7 7M33 56l7 7 7-7" fill="none" stroke="#666" stroke-width="5"/></svg>
<div class="a" style="left:1738px;top:1082px;width:79px;height:79px;background:#fff;border-radius:4px;box-shadow:0 1px 4px rgba(0,0,0,.3)"></div>
<svg class="a" style="left:1738px;top:1082px" width="79" height="79" viewBox="0 0 79 79"><circle cx="39.5" cy="20" r="9.5" fill="#f5bd3c" stroke="#c08a1e" stroke-width="1"/><path d="M28 33h23l5 22h-5l-3-10v24h-6V56h-5v13h-6V45l-3 10h-5z" fill="#f5bd3c" stroke="#c08a1e" stroke-width="1"/><path d="M34 33h11l-5.5 8z" fill="#e2762a"/></svg>
<svg class="a" style="left:17px;top:1162px" width="124" height="46" viewBox="0 0 124 46" font-family="Liberation Sans" font-weight="bold" font-size="34" stroke="#e8f4f0" stroke-opacity=".85" stroke-width="4" paint-order="stroke"><text x="2" y="32" fill="#4285f4">G</text><text x="29" y="32" fill="#ea4335">o</text><text x="49" y="32" fill="#fbbc05">o</text><text x="69" y="32" fill="#4285f4">g</text><text x="90" y="32" fill="#34a853">l</text><text x="99" y="32" fill="#ea4335">e</text></svg>
<div class="a" style="left:646px;top:1182px;width:1192px;height:28px;background:rgba(235,245,248,.72)"></div>
<div class="a" style="left:775px;top:1182px;width:2px;height:28px;background:rgba(255,255,255,.9)"></div>
<div class="a" style="left:1614px;top:1182px;width:2px;height:28px;background:rgba(255,255,255,.9)"></div>
<div class="t" style="left:657px;top:1187px;font-size:20px;letter-spacing:-0.1px;color:#222">Kurzbefehle</div>
<div class="t" style="left:787px;top:1187px;font-size:20px;letter-spacing:-0.26px;color:#222">Kartendaten ©2026 GeoBasis-DE/BKG (©2009), Google, Inst. Geogr. Nacional, Mapa GISrael</div>
<div class="t" style="left:1626px;top:1187px;font-size:20px;letter-spacing:-0.05px;color:#222">Nutzungsbedingungen</div>
</div>
</div>
<!-- CHAT -->
<div class="w" id="wc" style="left:2112px;top:336px;width:1250px;height:679px">
  <div class="wh"></div>
  <svg class="a" style="left:38px;top:48px" width="21" height="33" viewBox="0 0 21 33"><g fill="#efa082"><circle cx="4" cy="4" r="4"/><circle cx="16" cy="4" r="4"/><circle cx="4" cy="16" r="4"/><circle cx="16" cy="16" r="4"/><circle cx="4" cy="28" r="4"/><circle cx="16" cy="28" r="4"/></g></svg>
  <div class="wt" style="left:89px;top:48px;letter-spacing:1.55px">Chat: Beispiel-Projekt</div>
  <svg class="a" style="left:986px;top:40px" width="48" height="48" viewBox="0 0 24 24"><path fill="#2d1a12" d="M3 17.25V21h3.75L17.81 9.94l-3.75-3.75L3 17.25zM20.71 7.04a.996.996 0 0 0 0-1.41l-2.34-2.34a.996.996 0 0 0-1.41 0l-1.83 1.83 3.75 3.75 1.83-1.83z"/></svg>
  <svg class="a" style="left:1075px;top:40px" width="48" height="48" viewBox="0 0 24 24"><path fill="#2d1a12" d="M19 19H5V5h7V3H5a2 2 0 0 0-2 2v14a2 2 0 0 0 2 2h14c1.1 0 2-.9 2-2v-7h-2v7zM14 3v2h3.59l-9.83 9.83 1.41 1.41L19 6.41V10h2V3h-7z"/></svg>
  <svg class="a" style="left:1173px;top:50px" width="28" height="28" viewBox="0 0 28 28"><path d="M1.5 1.5L26.5 26.5M26.5 1.5L1.5 26.5" stroke="#8a7c75" stroke-width="3.6"/></svg>
  <div class="a" style="left:25px;top:154px;width:1201px;height:99px;background:#e9e8e7;border-radius:12px"></div>
  <div class="t msg" style="left:36px;top:171px">Max Muster</div>
  <div class="t ts" style="right:37px;top:171px">15.05.2025 05:37</div>
  <div class="t msg" style="left:36px;top:211px">Sehr gut, dann kann Sabine mit der Abrechnung anfangen.</div>
  <div class="a" style="left:25px;top:286px;width:1202px;height:420px;background:#e9e8e7;border-radius:12px"></div>
  <div class="t msg" style="left:36px;top:301px">Martin Muster</div>
  <div class="t ts" style="right:36px;top:301px">15.05.2025 05:16</div>
  <div class="a" style="left:37px;top:342px;width:1178px;height:400px;background:#f8f8f8;border-radius:10px"></div>
  <div class="a" id="doc" style="left:468px;top:343px;width:317px;height:321px;background:#fff;overflow:hidden"><svg class="a" style="left:0;top:0" width="317" height="321" viewBox="9 3 317 321" stroke="#000"><line x1="13.69" y1="13.69" x2="313.59" y2="13.69" stroke-width="1.1"/><line x1="13.69" y1="13.69" x2="13.69" y2="323.54" stroke-width="1.1"/><line x1="313.09" y1="13.69" x2="313.09" y2="323.54" stroke-width="1.1"/><line x1="13.69" y1="34.84" x2="182.18" y2="34.84" stroke-width="1"/><line x1="182.18" y1="13.69" x2="182.18" y2="97.56" stroke-width="1"/><line x1="13.69" y1="37.33" x2="313.09" y2="37.33" stroke-width="0.9"/><line x1="13.69" y1="45.55" x2="313.09" y2="45.55" stroke-width="0.9"/><line x1="13.69" y1="55.5" x2="182.18" y2="55.5" stroke-width="0.9"/><line x1="13.69" y1="84.12" x2="182.18" y2="84.12" stroke-width="0.9"/><line x1="13.69" y1="97.56" x2="313.09" y2="97.56" stroke-width="1.1"/><line x1="13.69" y1="103.29" x2="313.09" y2="103.29" stroke-width="0.6"/><line x1="13.69" y1="109.01" x2="313.09" y2="109.01" stroke-width="0.6"/><line x1="13.69" y1="120.21" x2="313.09" y2="120.21" stroke-width="0.6"/><line x1="13.69" y1="125.68" x2="313.09" y2="125.68" stroke-width="0.6"/><line x1="107.02" y1="109.01" x2="107.02" y2="120.21" stroke-width="0.6"/><line x1="214.04" y1="109.01" x2="214.04" y2="120.21" stroke-width="0.6"/><line x1="13.69" y1="130.66" x2="313.09" y2="130.66" stroke-width="1"/><line x1="13.69" y1="160.03" x2="313.09" y2="160.03" stroke-width="0.8"/><line x1="13.69" y1="175.46" x2="313.09" y2="175.46" stroke-width="1"/><line x1="13.69" y1="182.93" x2="313.09" y2="182.93" stroke-width="1"/><line x1="90.09" y1="130.66" x2="90.09" y2="175.46" stroke-width="0.7"/><line x1="100.8" y1="130.66" x2="100.8" y2="175.46" stroke-width="0.7"/><line x1="110.75" y1="130.66" x2="110.75" y2="175.46" stroke-width="0.7"/><line x1="205.33" y1="130.66" x2="205.33" y2="175.46" stroke-width="0.7"/><line x1="214.53" y1="130.66" x2="214.53" y2="175.46" stroke-width="0.7"/><line x1="225.24" y1="130.66" x2="225.24" y2="175.46" stroke-width="0.7"/><line x1="293.18" y1="130.66" x2="293.18" y2="175.46" stroke-width="0.7"/><line x1="302.39" y1="130.66" x2="302.39" y2="175.46" stroke-width="0.7"/><line x1="13.69" y1="206.07" x2="313.09" y2="206.07" stroke-width="0.8"/><line x1="13.69" y1="214.04" x2="298.66" y2="214.04" stroke-width="0.7"/><line x1="13.69" y1="222" x2="298.66" y2="222" stroke-width="0.7"/><line x1="13.69" y1="230.21" x2="298.66" y2="230.21" stroke-width="0.7"/><line x1="13.69" y1="238.18" x2="298.66" y2="238.18" stroke-width="0.7"/><line x1="13.69" y1="245.89" x2="298.66" y2="245.89" stroke-width="0.7"/><line x1="13.69" y1="253.86" x2="298.66" y2="253.86" stroke-width="0.7"/><line x1="13.69" y1="261.82" x2="298.66" y2="261.82" stroke-width="0.7"/><line x1="13.69" y1="270.03" x2="298.66" y2="270.03" stroke-width="0.7"/><line x1="13.69" y1="278" x2="298.66" y2="278" stroke-width="0.7"/><line x1="13.69" y1="286.21" x2="298.66" y2="286.21" stroke-width="0.7"/><line x1="13.69" y1="294.18" x2="298.66" y2="294.18" stroke-width="0.7"/><line x1="13.69" y1="301.64" x2="298.66" y2="301.64" stroke-width="0.7"/><line x1="26.88" y1="182.93" x2="26.88" y2="301.64" stroke-width="0.7"/><line x1="74.17" y1="182.93" x2="74.17" y2="301.64" stroke-width="0.7"/><line x1="88.35" y1="182.93" x2="88.35" y2="301.64" stroke-width="0.7"/><line x1="121.45" y1="182.93" x2="121.45" y2="301.64" stroke-width="0.7"/><line x1="149.33" y1="182.93" x2="149.33" y2="301.64" stroke-width="0.7"/><line x1="163.76" y1="182.93" x2="163.76" y2="301.64" stroke-width="0.7"/><line x1="183.67" y1="182.93" x2="183.67" y2="301.64" stroke-width="0.7"/><line x1="215.28" y1="182.93" x2="215.28" y2="301.64" stroke-width="0.7"/><line x1="228.97" y1="182.93" x2="228.97" y2="301.64" stroke-width="0.7"/><line x1="243.4" y1="182.93" x2="243.4" y2="301.64" stroke-width="0.7"/><line x1="258.09" y1="182.93" x2="258.09" y2="301.64" stroke-width="0.7"/><line x1="278.25" y1="182.93" x2="278.25" y2="301.64" stroke-width="0.7"/><line x1="298.16" y1="182.93" x2="298.16" y2="301.64" stroke-width="0.7"/><line x1="215.28" y1="301.64" x2="215.28" y2="308.61" stroke-width="0.6"/><line x1="215.28" y1="308.61" x2="313.09" y2="308.61" stroke-width="0.6"/><rect x="288.2" y="16.18" width="22.4" height="22.4" fill="#fff" fill-opacity="1" stroke="none"/><rect x="288.2" y="16.18" width="22.4" height="22.4" fill="none" stroke-width="1"/><rect x="288.2" y="36.09" width="22.4" height="2.49" fill="#000" fill-opacity="1" stroke="none"/><rect x="297.41" y="19.91" width="11.2" height="14.93" fill="#000" fill-opacity="1" stroke="none"/><rect x="231.46" y="54.26" width="74.66" height="41.56" fill="#000" fill-opacity="1" stroke="none"/><rect x="97.56" y="88.85" width="23.15" height="6.97" fill="#000" fill-opacity="1" stroke="none"/><ellipse cx="216.53" cy="58.98" rx="7.47" ry="2.99" fill="none" stroke-width="1.6"/><text x="18.67" y="21.9" font-size="6.2" font-weight="bold" fill-opacity="1" stroke="none" font-family="Liberation Sans">Prüfung elektrischer Anlagen</text><text x="18.67" y="30.36" font-size="4.2" font-weight="bold" fill-opacity="1" stroke="none" font-family="Liberation Sans">Prüfprotokoll</text><text x="18.67" y="44.05" font-size="5.4" font-weight="bold" fill-opacity="1" stroke="none" font-family="Liberation Sans">Nr.</text><text x="17.67" y="102.79" font-size="4.2" font-weight="bold" fill-opacity="1" stroke="none" font-family="Liberation Sans">Prüfung  nach:</text><text x="17.67" y="136.14" font-size="4.2" font-weight="bold" fill-opacity="1" stroke="none" font-family="Liberation Sans">Besichtigen</text><text x="17.67" y="164.76" font-size="4.2" font-weight="bold" fill-opacity="1" stroke="none" font-family="Liberation Sans">Erproben</text><text x="17.67" y="180.44" font-size="4.2" font-weight="bold" fill-opacity="1" stroke="none" font-family="Liberation Sans">Messen</text><text x="17.67" y="306.62" font-size="4.2" font-weight="bold" fill-opacity="1" stroke="none" font-family="Liberation Sans">Durchgängigkeit Potentialausgleich</text><rect x="18.67" y="49.53" width="46.04" height="1.74" fill="#000" fill-opacity="0.45" stroke="none"/><rect x="102.04" y="49.53" width="27.38" height="1.74" fill="#000" fill-opacity="0.45" stroke="none"/><rect x="187.9" y="49.53" width="36.09" height="1.74" fill="#000" fill-opacity="0.45" stroke="none"/><rect x="102.04" y="40.82" width="14.93" height="1.74" fill="#000" fill-opacity="0.45" stroke="none"/><rect x="187.9" y="40.82" width="28.63" height="1.74" fill="#000" fill-opacity="0.45" stroke="none"/><rect x="17.42" y="86.86" width="17.42" height="1.74" fill="#000" fill-opacity="0.45" stroke="none"/><rect x="77.15" y="100.55" width="57.25" height="1.74" fill="#000" fill-opacity="0.45" stroke="none"/><rect x="154.31" y="100.55" width="42.31" height="1.74" fill="#000" fill-opacity="0.45" stroke="none"/><rect x="219.01" y="100.55" width="17.43" height="1.74" fill="#000" fill-opacity="0.45" stroke="none"/><rect x="17.42" y="105.53" width="27.38" height="1.74" fill="#000" fill-opacity="0.45" stroke="none"/><rect x="64.71" y="105.53" width="24.89" height="1.74" fill="#000" fill-opacity="0.45" stroke="none"/><rect x="114.48" y="105.53" width="24.89" height="1.74" fill="#000" fill-opacity="0.45" stroke="none"/><rect x="159.28" y="105.53" width="34.85" height="1.74" fill="#000" fill-opacity="0.45" stroke="none"/><rect x="214.04" y="105.53" width="44.8" height="1.74" fill="#000" fill-opacity="0.45" stroke="none"/><rect x="283.72" y="105.53" width="19.91" height="1.74" fill="#000" fill-opacity="0.45" stroke="none"/><rect x="17.42" y="111" width="32.36" height="1.74" fill="#000" fill-opacity="0.45" stroke="none"/><rect x="17.42" y="115.98" width="32.36" height="1.74" fill="#000" fill-opacity="0.45" stroke="none"/><rect x="109.51" y="111" width="62.22" height="1.74" fill="#000" fill-opacity="0.45" stroke="none"/><rect x="216.53" y="110.5" width="14.93" height="1.74" fill="#000" fill-opacity="0.45" stroke="none"/><rect x="17.42" y="121.2" width="9.96" height="1.75" fill="#000" fill-opacity="0.45" stroke="none"/><rect x="109.51" y="121.2" width="19.91" height="1.75" fill="#000" fill-opacity="0.45" stroke="none"/><rect x="141.86" y="121.2" width="12.45" height="1.75" fill="#000" fill-opacity="0.45" stroke="none"/><rect x="181.68" y="121.2" width="14.94" height="1.75" fill="#000" fill-opacity="0.45" stroke="none"/><rect x="221.5" y="121.2" width="19.91" height="1.75" fill="#000" fill-opacity="0.45" stroke="none"/><rect x="17.42" y="126.68" width="19.91" height="1.74" fill="#000" fill-opacity="0.45" stroke="none"/><rect x="17.42" y="138.13" width="62.22" height="1.49" fill="#000" fill-opacity="0.35" stroke="none"/><rect x="114.48" y="138.13" width="79.65" height="1.49" fill="#000" fill-opacity="0.35" stroke="none"/><rect x="226.98" y="138.13" width="46.79" height="1.49" fill="#000" fill-opacity="0.35" stroke="none"/><rect x="94.57" y="137.88" width="3.99" height="1.99" fill="#000" fill-opacity="0.5" stroke="none"/><rect x="104.53" y="137.88" width="3.48" height="1.99" fill="#000" fill-opacity="0.35" stroke="none"/><rect x="208.06" y="137.88" width="3.99" height="1.99" fill="#000" fill-opacity="0.5" stroke="none"/><rect x="218.02" y="137.88" width="3.48" height="1.99" fill="#000" fill-opacity="0.35" stroke="none"/><rect x="295.67" y="137.88" width="3.98" height="1.99" fill="#000" fill-opacity="0.4" stroke="none"/><rect x="306.12" y="137.88" width="3.49" height="1.99" fill="#000" fill-opacity="0.35" stroke="none"/><rect x="17.42" y="142.36" width="62.22" height="1.49" fill="#000" fill-opacity="0.35" stroke="none"/><rect x="114.48" y="142.36" width="79.65" height="1.49" fill="#000" fill-opacity="0.35" stroke="none"/><rect x="226.98" y="142.36" width="46.79" height="1.49" fill="#000" fill-opacity="0.35" stroke="none"/><rect x="94.57" y="142.11" width="3.99" height="1.99" fill="#000" fill-opacity="0.5" stroke="none"/><rect x="104.53" y="142.11" width="3.48" height="1.99" fill="#000" fill-opacity="0.35" stroke="none"/><rect x="208.06" y="142.11" width="3.99" height="1.99" fill="#000" fill-opacity="0.5" stroke="none"/><rect x="218.02" y="142.11" width="3.48" height="1.99" fill="#000" fill-opacity="0.35" stroke="none"/><rect x="295.67" y="142.11" width="3.98" height="1.99" fill="#000" fill-opacity="0.4" stroke="none"/><rect x="306.12" y="142.11" width="3.49" height="1.99" fill="#000" fill-opacity="0.35" stroke="none"/><rect x="17.42" y="146.59" width="62.22" height="1.49" fill="#000" fill-opacity="0.35" stroke="none"/><rect x="114.48" y="146.59" width="79.65" height="1.49" fill="#000" fill-opacity="0.35" stroke="none"/><rect x="226.98" y="146.59" width="46.79" height="1.49" fill="#000" fill-opacity="0.35" stroke="none"/><rect x="94.57" y="146.34" width="3.99" height="1.99" fill="#000" fill-opacity="0.5" stroke="none"/><rect x="104.53" y="146.34" width="3.48" height="1.99" fill="#000" fill-opacity="0.35" stroke="none"/><rect x="208.06" y="146.34" width="3.99" height="1.99" fill="#000" fill-opacity="0.5" stroke="none"/><rect x="218.02" y="146.34" width="3.48" height="1.99" fill="#000" fill-opacity="0.35" stroke="none"/><rect x="295.67" y="146.34" width="3.98" height="1.99" fill="#000" fill-opacity="0.4" stroke="none"/><rect x="306.12" y="146.34" width="3.49" height="1.99" fill="#000" fill-opacity="0.35" stroke="none"/><rect x="17.42" y="150.82" width="62.22" height="1.49" fill="#000" fill-opacity="0.35" stroke="none"/><rect x="114.48" y="150.82" width="79.65" height="1.49" fill="#000" fill-opacity="0.35" stroke="none"/><rect x="226.98" y="150.82" width="46.79" height="1.49" fill="#000" fill-opacity="0.35" stroke="none"/><rect x="94.57" y="150.57" width="3.99" height="1.99" fill="#000" fill-opacity="0.5" stroke="none"/><rect x="104.53" y="150.57" width="3.48" height="1.99" fill="#000" fill-opacity="0.35" stroke="none"/><rect x="208.06" y="150.57" width="3.99" height="1.99" fill="#000" fill-opacity="0.5" stroke="none"/><rect x="218.02" y="150.57" width="3.48" height="1.99" fill="#000" fill-opacity="0.35" stroke="none"/><rect x="295.67" y="150.57" width="3.98" height="1.99" fill="#000" fill-opacity="0.4" stroke="none"/><rect x="306.12" y="150.57" width="3.49" height="1.99" fill="#000" fill-opacity="0.35" stroke="none"/><rect x="17.42" y="155.05" width="62.22" height="1.5" fill="#000" fill-opacity="0.35" stroke="none"/><rect x="114.48" y="155.05" width="79.65" height="1.5" fill="#000" fill-opacity="0.35" stroke="none"/><rect x="226.98" y="155.05" width="46.79" height="1.5" fill="#000" fill-opacity="0.35" stroke="none"/><rect x="94.57" y="154.8" width="3.99" height="1.99" fill="#000" fill-opacity="0.5" stroke="none"/><rect x="104.53" y="154.8" width="3.48" height="1.99" fill="#000" fill-opacity="0.35" stroke="none"/><rect x="208.06" y="154.8" width="3.99" height="1.99" fill="#000" fill-opacity="0.5" stroke="none"/><rect x="218.02" y="154.8" width="3.48" height="1.99" fill="#000" fill-opacity="0.35" stroke="none"/><rect x="295.67" y="154.8" width="3.98" height="1.99" fill="#000" fill-opacity="0.4" stroke="none"/><rect x="306.12" y="154.8" width="3.49" height="1.99" fill="#000" fill-opacity="0.35" stroke="none"/><rect x="17.42" y="163.02" width="54.76" height="1.49" fill="#000" fill-opacity="0.35" stroke="none"/><rect x="114.48" y="163.02" width="69.69" height="1.49" fill="#000" fill-opacity="0.35" stroke="none"/><rect x="226.98" y="163.02" width="36.83" height="1.49" fill="#000" fill-opacity="0.35" stroke="none"/><rect x="17.42" y="167.25" width="54.76" height="1.49" fill="#000" fill-opacity="0.35" stroke="none"/><rect x="114.48" y="167.25" width="69.69" height="1.49" fill="#000" fill-opacity="0.35" stroke="none"/><rect x="226.98" y="167.25" width="36.83" height="1.49" fill="#000" fill-opacity="0.35" stroke="none"/><rect x="17.42" y="171.48" width="54.76" height="1.49" fill="#000" fill-opacity="0.35" stroke="none"/><rect x="114.48" y="171.48" width="69.69" height="1.49" fill="#000" fill-opacity="0.35" stroke="none"/><rect x="226.98" y="171.48" width="36.83" height="1.49" fill="#000" fill-opacity="0.35" stroke="none"/><rect x="60.98" y="177.7" width="52.26" height="3.24" fill="#000" fill-opacity="0.4" stroke="none"/><rect x="116.97" y="177.2" width="107.02" height="4.48" fill="#000" fill-opacity="0.55" stroke="none"/><rect x="29.87" y="184.67" width="32.35" height="2.49" fill="#000" fill-opacity="0.35" stroke="none"/><rect x="29.87" y="190.39" width="32.35" height="2.49" fill="#000" fill-opacity="0.3" stroke="none"/><rect x="29.87" y="196.12" width="32.35" height="2.49" fill="#000" fill-opacity="0.25" stroke="none"/><rect x="77.15" y="184.67" width="34.85" height="2.49" fill="#000" fill-opacity="0.35" stroke="none"/><rect x="77.15" y="190.39" width="34.85" height="2.49" fill="#000" fill-opacity="0.3" stroke="none"/><rect x="77.15" y="196.12" width="34.85" height="2.49" fill="#000" fill-opacity="0.25" stroke="none"/><rect x="121.95" y="184.67" width="22.4" height="2.49" fill="#000" fill-opacity="0.35" stroke="none"/><rect x="121.95" y="190.39" width="22.4" height="2.49" fill="#000" fill-opacity="0.3" stroke="none"/><rect x="121.95" y="196.12" width="22.4" height="2.49" fill="#000" fill-opacity="0.25" stroke="none"/><rect x="149.33" y="184.67" width="12.44" height="2.49" fill="#000" fill-opacity="0.35" stroke="none"/><rect x="149.33" y="190.39" width="12.44" height="2.49" fill="#000" fill-opacity="0.3" stroke="none"/><rect x="149.33" y="196.12" width="12.44" height="2.49" fill="#000" fill-opacity="0.25" stroke="none"/><rect x="164.26" y="184.67" width="17.42" height="2.49" fill="#000" fill-opacity="0.35" stroke="none"/><rect x="164.26" y="190.39" width="17.42" height="2.49" fill="#000" fill-opacity="0.3" stroke="none"/><rect x="164.26" y="196.12" width="17.42" height="2.49" fill="#000" fill-opacity="0.25" stroke="none"/><rect x="187.9" y="184.67" width="21.16" height="2.49" fill="#000" fill-opacity="0.35" stroke="none"/><rect x="187.9" y="190.39" width="21.16" height="2.49" fill="#000" fill-opacity="0.3" stroke="none"/><rect x="187.9" y="196.12" width="21.16" height="2.49" fill="#000" fill-opacity="0.25" stroke="none"/><rect x="216.53" y="184.67" width="79.64" height="2.49" fill="#000" fill-opacity="0.35" stroke="none"/><rect x="216.53" y="190.39" width="79.64" height="2.49" fill="#000" fill-opacity="0.3" stroke="none"/><rect x="216.53" y="196.12" width="79.64" height="2.49" fill="#000" fill-opacity="0.25" stroke="none"/><rect x="298.66" y="184.67" width="12.44" height="2.49" fill="#000" fill-opacity="0.35" stroke="none"/><rect x="298.66" y="190.39" width="12.44" height="2.49" fill="#000" fill-opacity="0.3" stroke="none"/><rect x="298.66" y="196.12" width="12.44" height="2.49" fill="#000" fill-opacity="0.25" stroke="none"/><rect x="37.33" y="208.56" width="24.89" height="2.49" fill="#000" fill-opacity="0.3" stroke="none"/><rect x="74.66" y="207.07" width="12.45" height="3.73" fill="#000" fill-opacity="0.6" stroke="none"/><rect x="92.09" y="207.07" width="24.88" height="3.73" fill="#000" fill-opacity="0.6" stroke="none"/><rect x="124.44" y="207.07" width="11.2" height="3.73" fill="#000" fill-opacity="0.6" stroke="none"/><rect x="150.57" y="207.07" width="8.71" height="3.73" fill="#000" fill-opacity="0.6" stroke="none"/><rect x="165.51" y="207.07" width="12.44" height="3.73" fill="#000" fill-opacity="0.6" stroke="none"/><rect x="191.64" y="207.07" width="11.2" height="3.73" fill="#000" fill-opacity="0.6" stroke="none"/><rect x="17.42" y="215.78" width="6.22" height="3.73" fill="#000" fill-opacity="0.6" stroke="none"/><rect x="29.87" y="215.78" width="36.08" height="3.73" fill="#000" fill-opacity="0.6" stroke="none"/><rect x="74.17" y="215.78" width="12.94" height="3.73" fill="#000" fill-opacity="0.6" stroke="none"/><rect x="92.58" y="215.78" width="24.39" height="3.73" fill="#000" fill-opacity="0.6" stroke="none"/><rect x="129.42" y="215.78" width="4.98" height="3.73" fill="#000" fill-opacity="0.6" stroke="none"/><rect x="150.57" y="215.78" width="8.71" height="3.73" fill="#000" fill-opacity="0.6" stroke="none"/><rect x="164.26" y="215.78" width="13.69" height="3.73" fill="#000" fill-opacity="0.6" stroke="none"/><rect x="192.88" y="215.78" width="9.96" height="3.73" fill="#000" fill-opacity="0.6" stroke="none"/><rect x="216.53" y="215.78" width="8.71" height="3.73" fill="#000" fill-opacity="0.6" stroke="none"/><rect x="231.46" y="215.78" width="8.71" height="3.73" fill="#000" fill-opacity="0.6" stroke="none"/><rect x="245.15" y="215.78" width="9.95" height="3.73" fill="#000" fill-opacity="0.6" stroke="none"/><rect x="260.08" y="215.78" width="9.95" height="3.73" fill="#000" fill-opacity="0.6" stroke="none"/><rect x="279.99" y="215.78" width="12.44" height="3.73" fill="#000" fill-opacity="0.6" stroke="none"/><rect x="17.42" y="223.74" width="6.22" height="3.74" fill="#000" fill-opacity="0.6" stroke="none"/><rect x="29.87" y="223.74" width="37.33" height="3.74" fill="#000" fill-opacity="0.6" stroke="none"/><rect x="74.17" y="223.74" width="12.94" height="3.74" fill="#000" fill-opacity="0.6" stroke="none"/><rect x="92.58" y="223.74" width="24.39" height="3.74" fill="#000" fill-opacity="0.6" stroke="none"/><rect x="129.42" y="223.74" width="4.98" height="3.74" fill="#000" fill-opacity="0.6" stroke="none"/><rect x="150.57" y="223.74" width="8.71" height="3.74" fill="#000" fill-opacity="0.6" stroke="none"/><rect x="164.26" y="223.74" width="13.69" height="3.74" fill="#000" fill-opacity="0.6" stroke="none"/><rect x="192.88" y="223.74" width="9.96" height="3.74" fill="#000" fill-opacity="0.6" stroke="none"/><rect x="216.53" y="223.74" width="8.71" height="3.74" fill="#000" fill-opacity="0.6" stroke="none"/><rect x="231.46" y="223.74" width="8.71" height="3.74" fill="#000" fill-opacity="0.6" stroke="none"/><rect x="245.15" y="223.74" width="9.95" height="3.74" fill="#000" fill-opacity="0.6" stroke="none"/><rect x="260.08" y="223.74" width="9.95" height="3.74" fill="#000" fill-opacity="0.6" stroke="none"/><rect x="279.99" y="223.74" width="12.44" height="3.74" fill="#000" fill-opacity="0.6" stroke="none"/><rect x="14.93" y="231.71" width="8.71" height="3.73" fill="#000" fill-opacity="0.6" stroke="none"/><rect x="29.87" y="231.71" width="41.06" height="3.73" fill="#000" fill-opacity="0.6" stroke="none"/><rect x="74.17" y="231.71" width="12.94" height="3.73" fill="#000" fill-opacity="0.6" stroke="none"/><rect x="92.58" y="231.71" width="24.39" height="3.73" fill="#000" fill-opacity="0.6" stroke="none"/><rect x="129.42" y="231.71" width="4.98" height="3.73" fill="#000" fill-opacity="0.6" stroke="none"/><rect x="150.57" y="231.71" width="8.71" height="3.73" fill="#000" fill-opacity="0.6" stroke="none"/><rect x="164.26" y="231.71" width="13.69" height="3.73" fill="#000" fill-opacity="0.6" stroke="none"/><rect x="192.88" y="231.71" width="9.96" height="3.73" fill="#000" fill-opacity="0.6" stroke="none"/><rect x="216.53" y="231.71" width="8.71" height="3.73" fill="#000" fill-opacity="0.6" stroke="none"/><rect x="231.46" y="231.71" width="8.71" height="3.73" fill="#000" fill-opacity="0.6" stroke="none"/><rect x="245.15" y="231.71" width="9.95" height="3.73" fill="#000" fill-opacity="0.6" stroke="none"/><rect x="260.08" y="231.71" width="9.95" height="3.73" fill="#000" fill-opacity="0.6" stroke="none"/><rect x="279.99" y="231.71" width="12.44" height="3.73" fill="#000" fill-opacity="0.6" stroke="none"/><rect x="14.93" y="239.67" width="8.71" height="3.73" fill="#000" fill-opacity="0.6" stroke="none"/><rect x="29.87" y="239.67" width="17.42" height="3.73" fill="#000" fill-opacity="0.6" stroke="none"/><rect x="74.17" y="239.67" width="12.94" height="3.73" fill="#000" fill-opacity="0.6" stroke="none"/><rect x="92.58" y="239.67" width="24.39" height="3.73" fill="#000" fill-opacity="0.6" stroke="none"/><rect x="129.42" y="239.67" width="4.98" height="3.73" fill="#000" fill-opacity="0.6" stroke="none"/><rect x="150.57" y="239.67" width="8.71" height="3.73" fill="#000" fill-opacity="0.6" stroke="none"/><rect x="164.26" y="239.67" width="13.69" height="3.73" fill="#000" fill-opacity="0.6" stroke="none"/><rect x="192.88" y="239.67" width="9.96" height="3.73" fill="#000" fill-opacity="0.6" stroke="none"/><rect x="14.93" y="247.88" width="8.71" height="3.74" fill="#000" fill-opacity="0.6" stroke="none"/><rect x="31.11" y="247.88" width="22.4" height="3.74" fill="#000" fill-opacity="0.6" stroke="none"/><rect x="102.04" y="247.88" width="3.73" height="3.74" fill="#000" fill-opacity="0.6" stroke="none"/><rect x="129.42" y="247.88" width="4.98" height="3.74" fill="#000" fill-opacity="0.6" stroke="none"/><rect x="150.57" y="247.88" width="8.71" height="3.74" fill="#000" fill-opacity="0.6" stroke="none"/><rect x="14.93" y="255.85" width="8.71" height="3.73" fill="#000" fill-opacity="0.6" stroke="none"/><rect x="31.11" y="255.85" width="22.4" height="3.73" fill="#000" fill-opacity="0.6" stroke="none"/><rect x="102.04" y="255.85" width="3.73" height="3.73" fill="#000" fill-opacity="0.6" stroke="none"/><rect x="129.42" y="255.85" width="4.98" height="3.73" fill="#000" fill-opacity="0.6" stroke="none"/><rect x="150.57" y="255.85" width="8.71" height="3.73" fill="#000" fill-opacity="0.6" stroke="none"/><rect x="14.93" y="263.81" width="8.71" height="3.74" fill="#000" fill-opacity="0.6" stroke="none"/><rect x="31.11" y="263.81" width="22.4" height="3.74" fill="#000" fill-opacity="0.6" stroke="none"/><rect x="102.04" y="263.81" width="3.73" height="3.74" fill="#000" fill-opacity="0.6" stroke="none"/><rect x="129.42" y="263.81" width="4.98" height="3.74" fill="#000" fill-opacity="0.6" stroke="none"/><rect x="150.57" y="263.81" width="8.71" height="3.74" fill="#000" fill-opacity="0.6" stroke="none"/><rect x="14.93" y="271.78" width="8.71" height="3.73" fill="#000" fill-opacity="0.6" stroke="none"/><rect x="31.11" y="271.78" width="22.4" height="3.73" fill="#000" fill-opacity="0.6" stroke="none"/><rect x="102.04" y="271.78" width="3.73" height="3.73" fill="#000" fill-opacity="0.6" stroke="none"/><rect x="129.42" y="271.78" width="4.98" height="3.73" fill="#000" fill-opacity="0.6" stroke="none"/><rect x="150.57" y="271.78" width="8.71" height="3.73" fill="#000" fill-opacity="0.6" stroke="none"/><rect x="14.93" y="279.74" width="8.71" height="3.73" fill="#000" fill-opacity="0.6" stroke="none"/><rect x="31.11" y="279.74" width="22.4" height="3.73" fill="#000" fill-opacity="0.6" stroke="none"/><rect x="102.04" y="279.74" width="3.73" height="3.73" fill="#000" fill-opacity="0.6" stroke="none"/><rect x="129.42" y="279.74" width="4.98" height="3.73" fill="#000" fill-opacity="0.6" stroke="none"/><rect x="150.57" y="279.74" width="8.71" height="3.73" fill="#000" fill-opacity="0.6" stroke="none"/><rect x="14.93" y="287.46" width="8.71" height="3.73" fill="#000" fill-opacity="0.6" stroke="none"/><rect x="31.11" y="287.46" width="22.4" height="3.73" fill="#000" fill-opacity="0.6" stroke="none"/><rect x="102.04" y="287.46" width="3.73" height="3.73" fill="#000" fill-opacity="0.6" stroke="none"/><rect x="129.42" y="287.46" width="4.98" height="3.73" fill="#000" fill-opacity="0.6" stroke="none"/><rect x="150.57" y="287.46" width="8.71" height="3.73" fill="#000" fill-opacity="0.6" stroke="none"/><rect x="14.93" y="295.17" width="8.71" height="3.73" fill="#000" fill-opacity="0.6" stroke="none"/><rect x="29.87" y="295.17" width="36.08" height="3.73" fill="#000" fill-opacity="0.6" stroke="none"/><rect x="74.17" y="295.17" width="12.94" height="3.73" fill="#000" fill-opacity="0.6" stroke="none"/><rect x="92.58" y="295.17" width="24.39" height="3.73" fill="#000" fill-opacity="0.6" stroke="none"/><rect x="125.68" y="295.17" width="8.72" height="3.73" fill="#000" fill-opacity="0.6" stroke="none"/><rect x="150.57" y="295.17" width="26.13" height="3.73" fill="#000" fill-opacity="0.6" stroke="none"/><rect x="192.88" y="295.17" width="9.96" height="3.73" fill="#000" fill-opacity="0.6" stroke="none"/><rect x="216.53" y="295.17" width="8.71" height="3.73" fill="#000" fill-opacity="0.6" stroke="none"/><rect x="231.46" y="295.17" width="8.71" height="3.73" fill="#000" fill-opacity="0.6" stroke="none"/><rect x="245.15" y="295.17" width="9.95" height="3.73" fill="#000" fill-opacity="0.6" stroke="none"/><rect x="260.08" y="295.17" width="9.95" height="3.73" fill="#000" fill-opacity="0.6" stroke="none"/><rect x="279.99" y="295.17" width="12.44" height="3.73" fill="#000" fill-opacity="0.6" stroke="none"/><text x="16.18" y="95.32" font-size="4.6"  fill-opacity="0.8" stroke="none" font-family="Liberation Serif">E-Anlage  Eigenheim</text><rect x="17.42" y="312.84" width="47.29" height="1.5" fill="#000" fill-opacity="0.3" stroke="none"/><rect x="89.6" y="312.84" width="34.84" height="1.5" fill="#000" fill-opacity="0.3" stroke="none"/><rect x="143.11" y="312.84" width="28.62" height="1.5" fill="#000" fill-opacity="0.3" stroke="none"/><rect x="196.62" y="312.84" width="27.37" height="1.5" fill="#000" fill-opacity="0.3" stroke="none"/><rect x="245.15" y="312.84" width="31.11" height="1.5" fill="#000" fill-opacity="0.3" stroke="none"/><rect x="78.65" y="312.59" width="3.48" height="1.99" fill="#000" fill-opacity="0.5" stroke="none"/><rect x="132.4" y="312.59" width="3.49" height="1.99" fill="#000" fill-opacity="0.5" stroke="none"/><rect x="186.16" y="312.59" width="2.99" height="1.99" fill="#000" fill-opacity="0.5" stroke="none"/><rect x="234.44" y="312.59" width="3.49" height="1.99" fill="#000" fill-opacity="0.4" stroke="none"/><rect x="303.14" y="312.59" width="3.48" height="1.99" fill="#000" fill-opacity="0.4" stroke="none"/><rect x="17.42" y="317.07" width="47.29" height="1.5" fill="#000" fill-opacity="0.3" stroke="none"/><rect x="89.6" y="317.07" width="34.84" height="1.5" fill="#000" fill-opacity="0.3" stroke="none"/><rect x="143.11" y="317.07" width="28.62" height="1.5" fill="#000" fill-opacity="0.3" stroke="none"/><rect x="196.62" y="317.07" width="27.37" height="1.5" fill="#000" fill-opacity="0.3" stroke="none"/><rect x="245.15" y="317.07" width="31.11" height="1.5" fill="#000" fill-opacity="0.3" stroke="none"/><rect x="78.65" y="316.82" width="3.48" height="2" fill="#000" fill-opacity="0.5" stroke="none"/><rect x="132.4" y="316.82" width="3.49" height="2" fill="#000" fill-opacity="0.5" stroke="none"/><rect x="186.16" y="316.82" width="2.99" height="2" fill="#000" fill-opacity="0.5" stroke="none"/><rect x="234.44" y="316.82" width="3.49" height="2" fill="#000" fill-opacity="0.4" stroke="none"/><rect x="303.14" y="316.82" width="3.48" height="2" fill="#000" fill-opacity="0.4" stroke="none"/><rect x="17.42" y="321.3" width="47.29" height="1.5" fill="#000" fill-opacity="0.3" stroke="none"/><rect x="89.6" y="321.3" width="34.84" height="1.5" fill="#000" fill-opacity="0.3" stroke="none"/><rect x="143.11" y="321.3" width="28.62" height="1.5" fill="#000" fill-opacity="0.3" stroke="none"/><rect x="196.62" y="321.3" width="27.37" height="1.5" fill="#000" fill-opacity="0.3" stroke="none"/><rect x="245.15" y="321.3" width="31.11" height="1.5" fill="#000" fill-opacity="0.3" stroke="none"/><rect x="78.65" y="321.06" width="3.48" height="1.99" fill="#000" fill-opacity="0.5" stroke="none"/><rect x="132.4" y="321.06" width="3.49" height="1.99" fill="#000" fill-opacity="0.5" stroke="none"/><rect x="186.16" y="321.06" width="2.99" height="1.99" fill="#000" fill-opacity="0.5" stroke="none"/><rect x="234.44" y="321.06" width="3.49" height="1.99" fill="#000" fill-opacity="0.4" stroke="none"/><rect x="303.14" y="321.06" width="3.48" height="1.99" fill="#000" fill-opacity="0.4" stroke="none"/></svg></div>
  <div class="a" style="left:0;top:664px;width:1250px;height:15px;background:#fff"></div>
</div>
<!-- PROJEKTSTATUS -->
<div class="w" id="wp" style="left:2112px;top:1036px;width:1250px;height:680px">
  <div class="wh"></div>
  <svg class="a" style="left:38px;top:48px" width="21" height="33" viewBox="0 0 21 33"><g fill="#efa082"><circle cx="4" cy="4" r="4"/><circle cx="16" cy="4" r="4"/><circle cx="4" cy="16" r="4"/><circle cx="16" cy="16" r="4"/><circle cx="4" cy="28" r="4"/><circle cx="16" cy="28" r="4"/></g></svg>
  <div class="wt" style="left:89px;top:48px;letter-spacing:2.2px">Projektstatus</div>
  <svg class="a" style="left:1085px;top:50px" width="29" height="29" viewBox="0 0 29 29"><path d="M12.5 0h4v12.5H29v4H16.5V29h-4V16.5H0v-4h12.5z" fill="#2d1a12"/></svg>
  <svg class="a" style="left:1174px;top:50px" width="28" height="28" viewBox="0 0 28 28"><path d="M1.5 1.5L26.5 26.5M26.5 1.5L1.5 26.5" stroke="#8a7c75" stroke-width="3.6"/></svg>
  <div class="a" style="left:24px;top:154px;width:1202px;height:42px;border-top:2px solid #e6e6e6;border-bottom:3.5px solid #e3e3e3;background:#f9f9f9"></div>
  <div class="t thd" style="left:34px;top:160px">Projektname</div>
  <div class="t thd" style="left:757px;top:160px">Status</div>
  <div class="t empty" style="left:0;width:1250px;text-align:center;top:421px">Keine Projekte ausgewählt</div>
  <div class="t empty" style="left:0;width:1250px;text-align:center;top:481px">Klicke auf den + Button, um Projekte hinzuzufügen</div>
</div>
<div class="a" style="left:3254px;top:1608px;width:112px;height:112px;border-radius:50%;background:#ec6937;box-shadow:0 4px 8px rgba(0,0,0,.25)">
  <svg class="a" style="left:41px;top:41px" width="30" height="30" viewBox="0 0 30 30"><path d="M13.4 0h3.2v13.4H30v3.2H16.6V30h-3.2V16.6H0v-3.2h13.4z" fill="#fff"/></svg>
</div>

<svg class="a" style="left:0;top:1748px" width="6" height="6"><path d="M0 0L5 6H0z" fill="#2a1a1a"/></svg>
<svg class="a" style="left:3402px;top:1748px" width="6" height="6"><path d="M6 0L1 6H6z" fill="#2a1a1a"/></svg>
</body></html>
